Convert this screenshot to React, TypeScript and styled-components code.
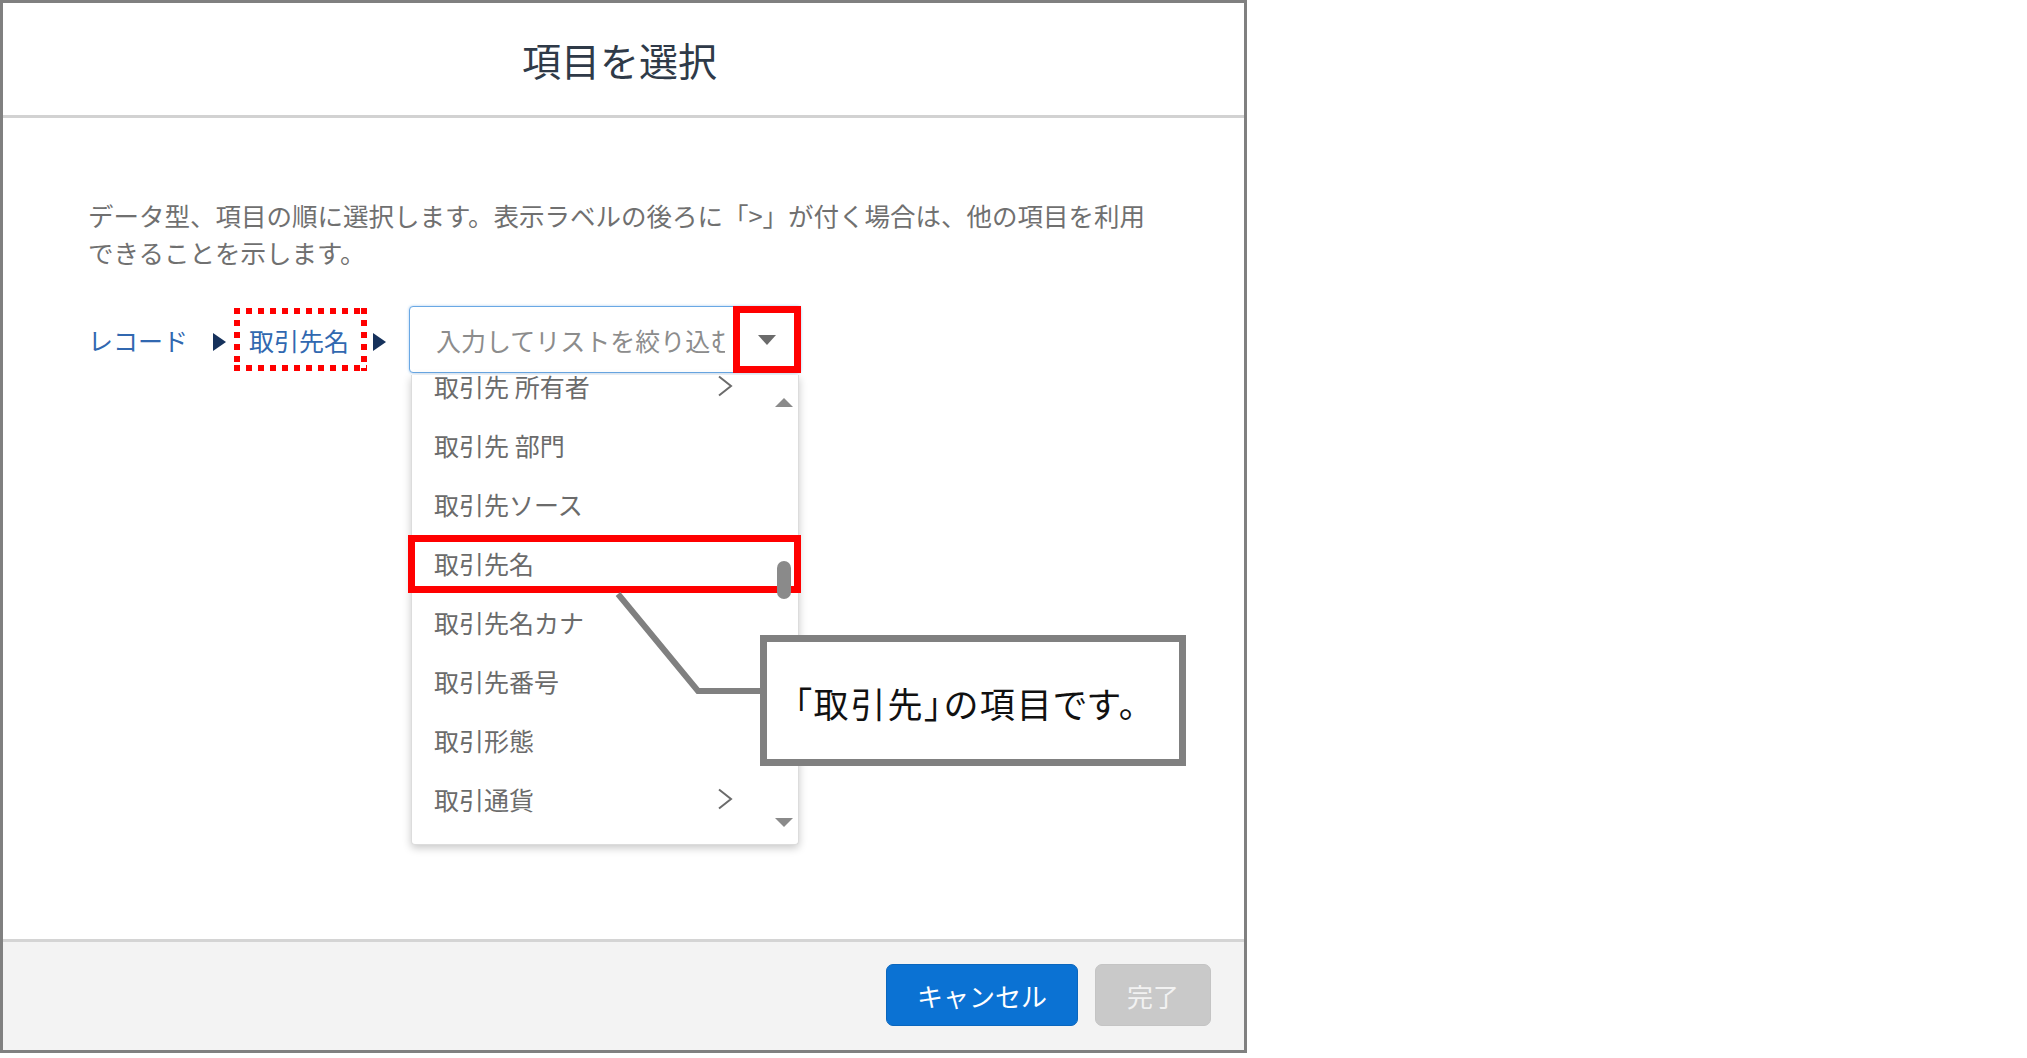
import React from "react";
import styled, { createGlobalStyle } from "styled-components";

const GlobalStyle = createGlobalStyle`
  html, body {
    margin: 0;
    padding: 0;
    background: #ffffff;
  }
  body {
    font-family: "Noto Sans CJK JP", "Noto Sans", sans-serif;
  }
`;

const fields = [
  { label: "取引先 所有者", more: true },
  { label: "取引先 部門" },
  { label: "取引先ソース" },
  { label: "取引先名" },
  { label: "取引先名カナ" },
  { label: "取引先番号" },
  { label: "取引形態" },
  { label: "取引通貨", more: true },
];

export default function App() {
  return (
    <>
      <GlobalStyle />
      <Modal>
        <ModalHeader>
          <Title>項目を選択</Title>
        </ModalHeader>
        <ModalBody>
          <Description>
            データ型、項目の順に選択します。表示ラベルの後ろに「&gt;」が付く場合は、他の項目を利用できることを示します。
          </Description>
          <PathRow>
            <Crumb>レコード</Crumb>
            <CrumbArrow />
            <CurrentCrumb>取引先名</CurrentCrumb>
            <CrumbArrow $last />
            <Combobox>
              <SearchInput placeholder="入力してリストを絞り込む" />
              <ToggleButton type="button">
                <svg width="18" height="10" viewBox="0 0 18 10">
                  <polygon points="0,0 18,0 9,10" fill="#6b6b6b" />
                </svg>
              </ToggleButton>
              <FieldList>
                <FieldViewport>
                  {fields.map((f) => (
                    <FieldRow key={f.label}>
                      <span>{f.label}</span>
                      {f.more && <Chevron />}
                    </FieldRow>
                  ))}
                </FieldViewport>
                <Highlight />
                <ScrollTrack>
                  <svg width="18" height="9" viewBox="0 0 18 9">
                    <polygon points="9,0 18,9 0,9" fill="#8a8a8a" />
                  </svg>
                  <ScrollThumb />
                  <ScrollEnd>
                    <svg width="18" height="9" viewBox="0 0 18 9">
                      <polygon points="0,0 18,0 9,9" fill="#8a8a8a" />
                    </svg>
                  </ScrollEnd>
                </ScrollTrack>
              </FieldList>
            </Combobox>
          </PathRow>
        </ModalBody>
        <ModalFooter>
          <PrimaryButton type="button">キャンセル</PrimaryButton>
          <DisabledButton type="button">完了</DisabledButton>
        </ModalFooter>

        <Connector width="170" height="120" viewBox="0 0 170 120">
          <polyline
            points="18,14 98,111 168,111"
            fill="none"
            stroke="#808080"
            strokeWidth="6"
          />
        </Connector>
        <Callout>「取引先」の項目です。</Callout>
      </Modal>
    </>
  );
}

function CrumbArrow({ $last }: { $last?: boolean }) {
  return (
    <ArrowIcon $last={$last} width="13" height="18" viewBox="0 0 13 18">
      <polygon points="0,0 13,9 0,18" fill="#16325c" />
    </ArrowIcon>
  );
}

function Chevron() {
  return (
    <ChevronIcon width="16" height="22" viewBox="0 0 16 22">
      <polyline
        points="2,1.5 14,11 2,20.5"
        fill="none"
        stroke="#6b6b6b"
        strokeWidth="2"
      />
    </ChevronIcon>
  );
}

const Modal = styled.div`
  position: relative;
  box-sizing: border-box;
  width: 1247px;
  height: 1053px;
  border: 3px solid #808080;
  background: #ffffff;
  display: flex;
  flex-direction: column;
`;

const ModalHeader = styled.header`
  height: 112px;
  border-bottom: 3px solid #d2d2d2;
  display: flex;
  align-items: center;
  justify-content: center;
  padding-right: 8px;
`;

const Title = styled.h2`
  margin: 0;
  font-size: 39px;
  font-weight: 400;
  color: #2f3a48;
  line-height: 1;
`;

const ModalBody = styled.main`
  flex: 1;
  padding: 78px 0 0 85px;
`;

const Description = styled.p`
  margin: 0;
  width: 1072px;
  font-size: 25.5px;
  line-height: 37px;
  color: #707070;
`;

const PathRow = styled.div`
  margin-top: 36px;
  display: flex;
  align-items: center;
  height: 67px;
`;

const Crumb = styled.span`
  font-size: 25px;
  color: #3168b0;
  margin-right: 25px;
`;

const ArrowIcon = styled.svg<{ $last?: boolean }>`
  flex: none;
  margin-top: 4px;
  margin-right: ${(p) => (p.$last ? "23px" : "8px")};
`;

const CurrentCrumb = styled.span`
  box-sizing: border-box;
  height: 63px;
  padding: 0 18px 0 15px;
  margin-right: 6px;
  display: flex;
  align-items: center;
  font-size: 25px;
  color: #3168b0;
  background:
    repeating-linear-gradient(90deg, #ff0000 0 6px, transparent 6px 12px) top left / 100% 6px no-repeat,
    repeating-linear-gradient(90deg, #ff0000 0 6px, transparent 6px 12px) bottom left / 100% 6px no-repeat,
    repeating-linear-gradient(180deg, #ff0000 0 6px, transparent 6px 12px) top left / 6px 100% no-repeat,
    repeating-linear-gradient(180deg, #ff0000 0 6px, transparent 6px 12px) top right / 6px 100% no-repeat;
`;

const Combobox = styled.div`
  position: relative;
  box-sizing: border-box;
  width: 392px;
  height: 67px;
  display: flex;
  border: 1px solid #6aa8e4;
  border-radius: 4px;
  box-shadow: 0 0 3px #a9cdf1;
  background: #ffffff;
`;

const SearchInput = styled.input`
  flex: 1;
  min-width: 0;
  border: none;
  outline: none;
  background: transparent;
  padding: 0 8px 0 26px;
  font-family: "Noto Sans CJK JP", "Noto Sans", sans-serif;
  font-size: 25px;
  color: #333333;
  &::placeholder {
    color: #8c8c8c;
  }
`;

const ToggleButton = styled.button`
  box-sizing: border-box;
  flex: none;
  width: 68px;
  height: calc(100% + 2px);
  margin: -1px -1px -1px 0;
  border: 7px solid #ff0000;
  background: #ffffff;
  padding: 0;
  display: flex;
  align-items: center;
  justify-content: center;
`;

const FieldList = styled.div`
  position: absolute;
  z-index: 2;
  top: calc(100% + 3px);
  left: 1px;
  box-sizing: border-box;
  width: 388px;
  height: 470px;
  background: #ffffff;
  border: 1px solid #dcdcdc;
  border-top: none;
  border-radius: 0 0 4px 4px;
  box-shadow: 0 3px 8px rgba(0, 0, 0, 0.22);
`;

const FieldViewport = styled.div`
  height: 100%;
  overflow: hidden;
  & > :first-child {
    margin-top: -19px;
  }
`;

const FieldRow = styled.div`
  box-sizing: border-box;
  height: 59px;
  display: flex;
  align-items: center;
  justify-content: space-between;
  padding: 0 65px 0 22px;
  font-size: 25px;
  color: #6b6b6b;
`;

const ChevronIcon = styled.svg`
  flex: none;
`;

const Highlight = styled.div`
  position: absolute;
  top: 160px;
  left: -4px;
  box-sizing: border-box;
  width: 393px;
  height: 58px;
  border: 7px solid #ff0000;
  pointer-events: none;
`;

const ScrollTrack = styled.div`
  position: absolute;
  top: 23px;
  right: 5px;
  width: 18px;
  height: 429px;
  display: flex;
  flex-direction: column;
  align-items: center;
`;

const ScrollThumb = styled.div`
  margin-top: 154px;
  width: 14px;
  height: 38px;
  border-radius: 7px;
  background: #8a8a8a;
`;

const ScrollEnd = styled.div`
  margin-top: auto;
  display: flex;
`;

const ModalFooter = styled.footer`
  box-sizing: border-box;
  height: 111px;
  border-top: 3px solid #d4d4d4;
  background: #f3f3f3;
  display: flex;
  align-items: center;
  justify-content: flex-end;
  gap: 17px;
  padding: 0 33px 2px 0;
`;

const BaseButton = styled.button`
  height: 62px;
  border-radius: 7px;
  font-family: "Noto Sans CJK JP", "Noto Sans", sans-serif;
  font-size: 26px;
  padding: 0;
`;

const PrimaryButton = styled(BaseButton)`
  width: 192px;
  background: #0b72d3;
  border: 1px solid #0a66bd;
  color: #ffffff;
`;

const DisabledButton = styled(BaseButton)`
  width: 116px;
  background: #c9c9c9;
  border: 1px solid #c4c4c4;
  color: #f2f2f2;
`;

const Connector = styled.svg`
  position: absolute;
  z-index: 3;
  left: 597px;
  top: 577px;
`;

const Callout = styled.div`
  position: absolute;
  z-index: 4;
  left: 757px;
  top: 632px;
  box-sizing: border-box;
  width: 426px;
  height: 131px;
  border: 7px solid #808080;
  background: #ffffff;
  display: flex;
  align-items: center;
  padding: 3px 0 0 27px;
  font-size: 35px;
  letter-spacing: 2px;
  font-feature-settings: "palt";
  color: #111111;
`;
